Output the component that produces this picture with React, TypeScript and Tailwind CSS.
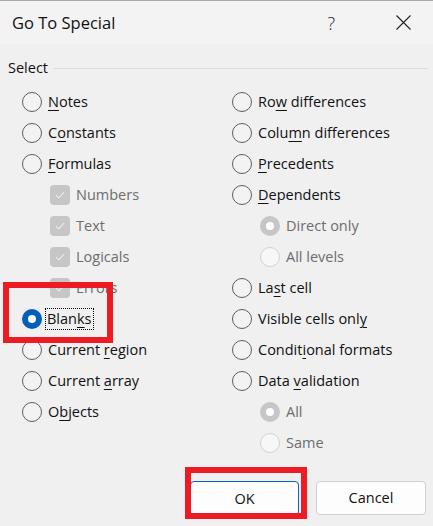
import React from "react";

type Item = {
  label: string;
  u?: number; // index of mnemonic letter
  kind: "radio" | "check" | "subradio";
  checked?: boolean;
  disabled?: boolean;
  focus?: boolean;
};

const left: Item[] = [
  { label: "Notes", u: 0, kind: "radio" },
  { label: "Constants", u: 1, kind: "radio" },
  { label: "Formulas", u: 0, kind: "radio" },
  { label: "Numbers", kind: "check", checked: true, disabled: true },
  { label: "Text", kind: "check", checked: true, disabled: true },
  { label: "Logicals", kind: "check", checked: true, disabled: true },
  { label: "Errors", kind: "check", checked: true, disabled: true },
  { label: "Blanks", u: 4, kind: "radio", checked: true, focus: true },
  { label: "Current region", u: 8, kind: "radio" },
  { label: "Current array", u: 8, kind: "radio" },
  { label: "Objects", u: 1, kind: "radio" },
];

const right: Item[] = [
  { label: "Row differences", u: 2, kind: "radio" },
  { label: "Column differences", u: 4, kind: "radio" },
  { label: "Precedents", u: 0, kind: "radio" },
  { label: "Dependents", u: 0, kind: "radio" },
  { label: "Direct only", kind: "subradio", checked: true, disabled: true },
  { label: "All levels", kind: "subradio", disabled: true },
  { label: "Last cell", u: 2, kind: "radio" },
  { label: "Visible cells only", u: 17, kind: "radio" },
  { label: "Conditional formats", u: 6, kind: "radio" },
  { label: "Data validation", u: 5, kind: "radio" },
  { label: "All", kind: "subradio", checked: true, disabled: true },
  { label: "Same", kind: "subradio", disabled: true },
];

function Label({ it }: { it: Item }) {
  const t = it.label;
  const body =
    it.u === undefined ? (
      t
    ) : (
      <>
        {t.slice(0, it.u)}
        <span className="underline decoration-1 underline-offset-[3px]">{t[it.u]}</span>
        {t.slice(it.u + 1)}
      </>
    );
  return (
    <span
      className={
        "whitespace-nowrap " +
        (it.disabled ? "text-[#6d6d6d] " : "text-[#111] ") +
        (it.focus ? "outline outline-1 outline-dotted outline-black -ml-[2px] pl-[1px] pr-[1px]" : "")
      }
    >
      {body}
    </span>
  );
}

function Mark({ it }: { it: Item }) {
  if (it.kind === "check") {
    return (
      <span className="grid h-5 w-5 shrink-0 place-items-center rounded-[4px] bg-[#c6c6c6]">
        <svg width="12" height="12" viewBox="0 0 12 12" fill="none">
          <path d="M2 6.3 L4.8 9 L10 3.2" stroke="#fff" strokeWidth="1" />
        </svg>
      </span>
    );
  }
  if (it.checked && !it.disabled) {
    return (
      <span className="grid h-5 w-5 shrink-0 place-items-center rounded-full bg-[#005fb8]">
        <span className="h-2 w-2 rounded-full bg-white" />
      </span>
    );
  }
  if (it.checked) {
    return (
      <span className="grid h-5 w-5 shrink-0 place-items-center rounded-full bg-[#c6c6c6]">
        <span className="h-2 w-2 rounded-full bg-white" />
      </span>
    );
  }
  if (it.disabled) {
    return <span className="h-5 w-5 shrink-0 rounded-full border border-[#d2d2d2] bg-[#f7f7f7]" />;
  }
  return <span className="h-5 w-5 shrink-0 rounded-full border border-[#5e5e5e] bg-[#f3f3f3]" />;
}

function Row({ it }: { it: Item }) {
  const indent = it.kind === "radio" ? "" : "pl-[28px]";
  return (
    <div className={"flex h-[31px] items-center gap-[6px] " + indent}>
      <Mark it={it} />
      <Label it={it} />
    </div>
  );
}

export default function App() {
  return (
    <div
      className="relative h-[526px] w-[433px] overflow-hidden bg-[#f0f0f0] text-[14.5px] leading-[20px]"
      style={{ fontFamily: '"Segoe UI", "Open Sans", sans-serif' }}
    >
      {/* TITLE */}
      <div className="flex h-[44px] items-center border-t border-[#a9a9a9] bg-[#f3f3f3]">
        <span className="ml-[12px] text-[16.5px] text-[#111]">Go To Special</span>
        <span className="ml-auto mr-[61px] text-[18px] font-light text-[#222]">?</span>
        <svg className="mr-[22px]" width="15" height="15" viewBox="0 0 15 15">
          <path d="M0.5 0.5 L14.5 14.5 M14.5 0.5 L0.5 14.5" stroke="#222" strokeWidth="1.1" />
        </svg>
      </div>

      {/* GROUP */}
      <div className="mt-[4px] flex h-[40px] items-center pl-[8px] pr-[5px]">
        <span className="text-[#111]">Select</span>
        <div className="ml-[6px] h-px flex-1 bg-[#dcdcdc]" />
      </div>

      <div className="-mt-[2px] grid grid-cols-[210px_1fr]">
        <div className="pl-[22px]">
          {left.map((it) => (
            <Row key={it.label} it={it} />
          ))}
        </div>
        <div className="pl-[22px]">
          {right.map((it) => (
            <Row key={it.label} it={it} />
          ))}
        </div>
      </div>

      {/* BUTTONS */}
      <div className="mt-[23px] flex items-start justify-end gap-[17px] pr-[7px]">
        <button className="h-[35px] w-[109px] rounded-[4px] border border-[#0067c0] bg-[#fdfdfd] text-[#111]">
          OK
        </button>
        <button className="h-[34px] w-[110px] rounded-[4px] border border-[#d0d0d0] bg-[#fdfdfd] text-[#111]">
          Cancel
        </button>
      </div>

      {/* highlight boxes */}
      <div className="pointer-events-none absolute left-[3px] top-[282px] h-[61px] w-[110px] border-[6px] border-[#ed1c24]" />
      <div className="pointer-events-none absolute left-[185px] top-[467px] h-[52px] w-[122px] border-[6px] border-[#ed1c24]" />
    </div>
  );
}
